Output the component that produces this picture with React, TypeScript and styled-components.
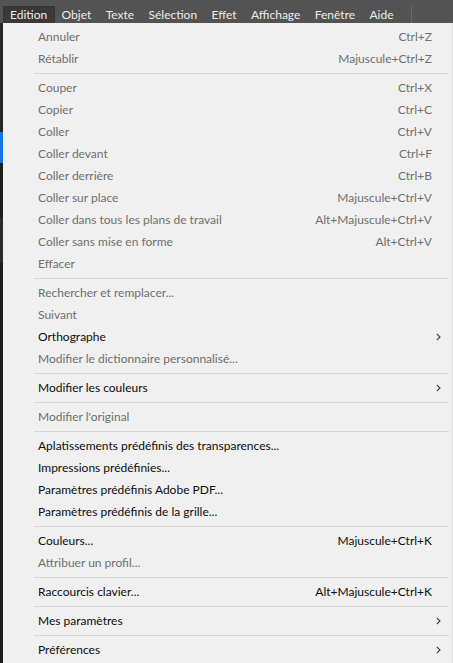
import React from "react";
import styled, { createGlobalStyle } from "styled-components";

const Global = createGlobalStyle`
  html, body { margin: 0; padding: 0; background: #1e1e1e; }
  body { font-family: Lato, "Noto Sans", sans-serif; font-size: 12px; }
`;

const Frame = styled.div`
  width: 453px;
  height: 663px;
  overflow: hidden;
  display: grid;
  grid-template-rows: 23px 1fr;
`;

const MenuBar = styled.div`
  display: flex;
  align-items: flex-end;
  background: #535353;
  padding-left: 3px;
`;

const MenuTitle = styled.div<{ $active?: boolean }>`
  height: 17px;
  line-height: 15px;
  padding: 0 6.4px 0 6px;
  color: #ececec;
  background: ${(p) => (p.$active ? "#393939" : "transparent")};
  box-sizing: border-box;
  border: 1px solid ${(p) => (p.$active ? "#333" : "transparent")};
  border-bottom: none;
  white-space: nowrap;
`;

const BarDivider = styled.div`
  width: 1px;
  height: 18px;
  margin-left: 10px;
  background: #676767;
`;

const Body = styled.div`
  display: flex;
  min-height: 0;
`;

const LeftStrip = styled.div`
  width: 3px;
  flex: none;
  background: linear-gradient(
    to bottom,
    #262626 0 109px,
    #1473e6 109px 140px,
    #1c1c1c 140px 195px,
    #2b2b2b 195px 240px,
    #1d1d1d 240px
  );
`;

const Panel = styled.div`
  flex: 1;
  background: #f0f0f0;
  border-right: 1px solid #dcdcdc;
  padding-top: 3px;
  display: flex;
  flex-direction: column;
`;

const Row = styled.div<{ $disabled?: boolean }>`
  display: grid;
  grid-template-columns: 35px 1fr auto 20px;
  align-items: center;
  box-sizing: border-box;
  height: 22px;
  padding-bottom: 2px;
  flex: none;
  color: ${(p) => (p.$disabled ? "#6f6f6f" : "#0d0d0d")};
  white-space: nowrap;
`;

const Label = styled.span`
  grid-column: 2;
`;

const Shortcut = styled.span`
  grid-column: 3;
  text-align: right;
`;

const Arrow = styled.span`
  grid-column: 4;
  display: flex;
  align-items: center;
  padding-left: 4px;
  padding-top: 1px;
`;

const Separator = styled.div`
  height: 1px;
  flex: none;
  margin: 3px 3px 3px 31px;
  background: #d6d6d6;
`;

type Item =
  | { sep: true }
  | { label: string; shortcut?: string; disabled?: boolean; sub?: boolean; sep?: false };

const items: Item[] = [
  { label: "Annuler", shortcut: "Ctrl+Z", disabled: true },
  { label: "Rétablir", shortcut: "Majuscule+Ctrl+Z", disabled: true },
  { sep: true },
  { label: "Couper", shortcut: "Ctrl+X", disabled: true },
  { label: "Copier", shortcut: "Ctrl+C", disabled: true },
  { label: "Coller", shortcut: "Ctrl+V", disabled: true },
  { label: "Coller devant", shortcut: "Ctrl+F", disabled: true },
  { label: "Coller derrière", shortcut: "Ctrl+B", disabled: true },
  { label: "Coller sur place", shortcut: "Majuscule+Ctrl+V", disabled: true },
  { label: "Coller dans tous les plans de travail", shortcut: "Alt+Majuscule+Ctrl+V", disabled: true },
  { label: "Coller sans mise en forme", shortcut: "Alt+Ctrl+V", disabled: true },
  { label: "Effacer", disabled: true },
  { sep: true },
  { label: "Rechercher et remplacer...", disabled: true },
  { label: "Suivant", disabled: true },
  { label: "Orthographe", sub: true },
  { label: "Modifier le dictionnaire personnalisé...", disabled: true },
  { sep: true },
  { label: "Modifier les couleurs", sub: true },
  { sep: true },
  { label: "Modifier l'original", disabled: true },
  { sep: true },
  { label: "Aplatissements prédéfinis des transparences..." },
  { label: "Impressions prédéfinies..." },
  { label: "Paramètres prédéfinis Adobe PDF..." },
  { label: "Paramètres prédéfinis de la grille..." },
  { sep: true },
  { label: "Couleurs...", shortcut: "Majuscule+Ctrl+K" },
  { label: "Attribuer un profil...", disabled: true },
  { sep: true },
  { label: "Raccourcis clavier...", shortcut: "Alt+Majuscule+Ctrl+K" },
  { sep: true },
  { label: "Mes paramètres", sub: true },
  { sep: true },
  { label: "Préférences", sub: true },
];

const titles = ["Edition", "Objet", "Texte", "Sélection", "Effet", "Affichage", "Fenêtre", "Aide"];

function Chevron() {
  return (
    <svg width="5" height="8" viewBox="0 0 5 8" fill="none">
      <path d="M0.8 0.8 L4 4 L0.8 7.2" stroke="#3a3a3a" strokeWidth="1.1" />
    </svg>
  );
}

export default function App() {
  return (
    <Frame>
      <Global />
      <MenuBar>
        {titles.map((t, i) => (
          <MenuTitle key={t} $active={i === 0}>
            {t}
          </MenuTitle>
        ))}
        <BarDivider />
      </MenuBar>
      <Body>
        <LeftStrip />
        <Panel>
          {items.map((it, i) =>
            it.sep ? (
              <Separator key={i} />
            ) : (
              <Row key={i} $disabled={it.disabled}>
                <Label>{it.label}</Label>
                {it.shortcut && <Shortcut>{it.shortcut}</Shortcut>}
                {it.sub && (
                  <Arrow>
                    <Chevron />
                  </Arrow>
                )}
              </Row>
            )
          )}
        </Panel>
      </Body>
    </Frame>
  );
}
